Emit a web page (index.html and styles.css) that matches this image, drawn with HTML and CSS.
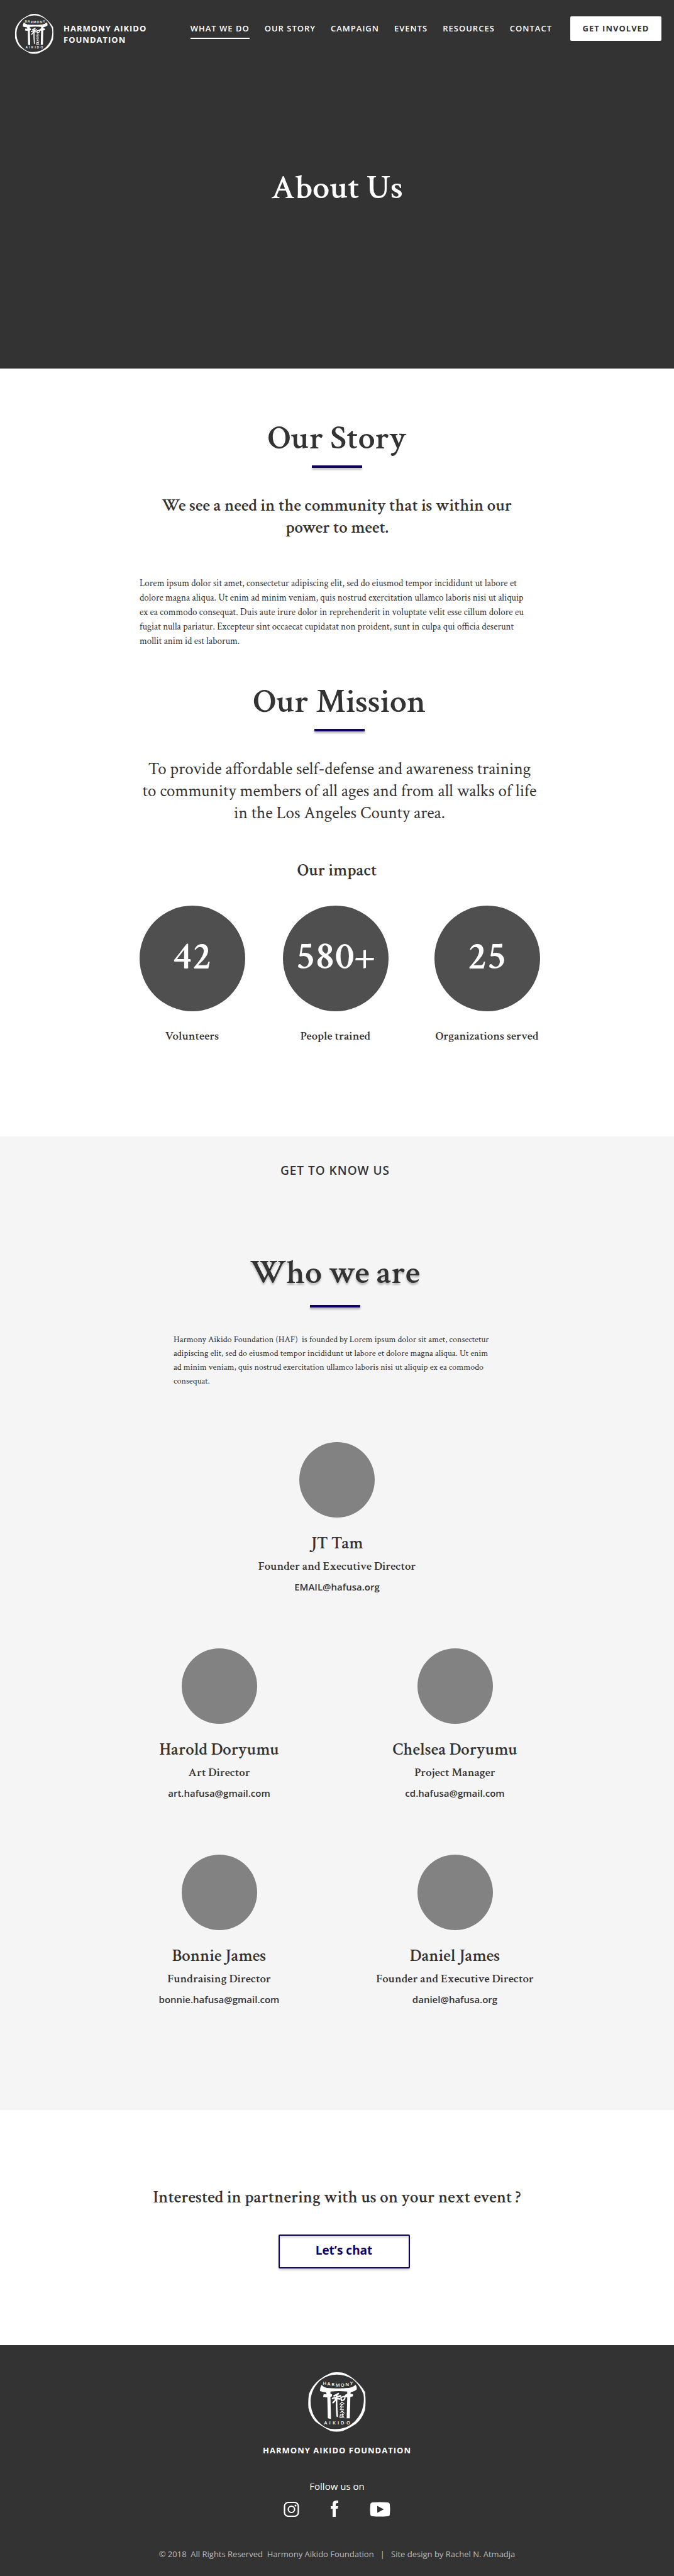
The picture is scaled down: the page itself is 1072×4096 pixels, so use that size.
FILE: index.html
```html
<!DOCTYPE html>
<html lang="en">
<head>
<meta charset="utf-8">
<meta name="viewport" content="width=device-width, initial-scale=1">
<title>About Us - Harmony Aikido Foundation</title>
<link rel="stylesheet" href="styles.css">
</head>
<body>
<header class="hero">
  <div class="topbar">
    <a class="brand" href="#">
      <svg class="seal brand-seal" viewBox="0 0 109 114" aria-hidden="true">
        <g id="gate">
          <path fill="currentColor" fill-rule="evenodd" d="M44 1 Q54 -1 66 1 Q80 6 92 18 Q103 28 108 38 Q110 56 108 72 Q102 90 90 99 Q78 107 66 112 Q54 115 42 112 Q28 105 13 94 Q3 82 0 68 Q-1 54 1 41 Q8 24 21 14 Q32 6 44 1 Z M46 5 Q30 8 20 18 Q5 34 4 54 Q4 74 13 87 Q26 105 42 108 Q58 110 72 105 Q90 97 100 78 Q108 60 105 42 Q98 24 84 13 Q66 2 46 5 Z"/>
          <path fill="currentColor" d="M25 24 Q22 29 22 36 Q28 38 33 38 L35 42 L29 42 L28 47 L36 48 L37 88 L43 89 L42 47 L45 46 L45 42 L42 41 L42 37 Q58 35 74 37 L74 41 L70 43 L70 47 L74 48 L73 88 L79 88 L80 47 L85 46 L85 42 L80 41 L81 38 Q88 37 92 33 Q93 28 90 24 Q85 29 77 30 Q57 32 35 30 Q28 28 25 24 Z"/>
          <g fill="none" stroke="currentColor" stroke-linecap="round">
            <path stroke-width="3" d="M57 41 Q52 44 49 45 M46 50 L61 45 M54 45 Q53 66 55 84 M53 49 Q51 55 47 58 M55 50 L60 51"/>
            <path stroke-width="2.500" d="M62 48 L69 46 Q71 50 67 53 L63 54 L62 48"/>
            <path stroke-width="1.500" d="M64 57 L60 61 M64 57 L68 60 M62 62 H66 M64 62 L61 66 H67 M63 68 L61 71 H67 M62 74 H66 L61 77 M65 75 L68 78 M61 81 L60 86 L68 87 M63 81 H67 M65 79 L64 84 H67"/>
          </g>
        </g>
        <text class="seal-text" x="31 39 47 56 65 74 82" y="24 25 26 27 27 26 24">HARMONY</text>
        <text class="seal-text" x="33 41 49 57 65 76" y="99">AIKIDO</text>
      </svg>
      <span class="brand-name">HARMONY AIKIDO FOUNDATION</span>
    </a>
    <nav class="nav">
      <a class="nav-link active" href="#">WHAT WE DO</a>
      <a class="nav-link" href="#story">OUR STORY</a>
      <a class="nav-link" href="#">CAMPAIGN</a>
      <a class="nav-link" href="#">EVENTS</a>
      <a class="nav-link" href="#">RESOURCES</a>
      <a class="nav-link" href="#">CONTACT</a>
      <button class="involved" type="button">GET INVOLVED</button>
    </nav>
  </div>
  <h1 class="title">About Us</h1>
</header>

<main>
  <section class="story" id="story">
    <h2 class="title ruled">Our Story</h2>
    <p class="lead">We see a need in the community that is within our power to meet.</p>
    <p class="copy">Lorem ipsum dolor sit amet, consectetur adipiscing elit, sed do eiusmod tempor incididunt ut labore et<br>dolore magna aliqua. Ut enim ad minim veniam, quis nostrud exercitation ullamco laboris nisi ut aliquip<br>ex ea commodo consequat. Duis aute irure dolor in reprehenderit in voluptate velit esse cillum dolore eu<br>fugiat nulla pariatur. Excepteur sint occaecat cupidatat non proident, sunt in culpa qui officia deserunt<br>mollit anim id est laborum.</p>
  </section>

  <section class="mission">
    <h2 class="title ruled">Our Mission</h2>
    <p class="statement">To provide affordable self-defense and awareness training<br>to community members of all ages and from all walks of life<br>in the Los Angeles County area.</p>
    <h3 class="impact-title">Our impact</h3>
    <dl class="impact">
      <div class="stat"><dd class="stat-value">42</dd><dt class="stat-label">Volunteers</dt></div>
      <div class="stat"><dd class="stat-value">580+</dd><dt class="stat-label">People trained</dt></div>
      <div class="stat"><dd class="stat-value">25</dd><dt class="stat-label">Organizations served</dt></div>
    </dl>
  </section>

  <section class="people">
    <div class="people-intro">
      <p class="eyebrow">GET TO KNOW US</p>
      <h2 class="title who ruled">Who we are</h2>
      <p class="bio">Harmony Aikido Foundation (HAF)&nbsp; is founded by Lorem ipsum dolor sit amet, consectetur<br>adipiscing elit, sed do eiusmod tempor incididunt ut labore et dolore magna aliqua. Ut enim<br>ad minim veniam, quis nostrud exercitation ullamco laboris nisi ut aliquip ex ea commodo<br>consequat.</p>
    </div>
    <div class="team">
      <article class="person lead-person">
        <div class="avatar"></div>
        <h3 class="name">JT Tam</h3>
        <p class="role">Founder and Executive Director</p>
        <a class="email" href="mailto:EMAIL@hafusa.org">EMAIL@hafusa.org</a>
      </article>
      <article class="person">
        <div class="avatar"></div>
        <h3 class="name">Harold Doryumu</h3>
        <p class="role">Art Director</p>
        <a class="email" href="mailto:art.hafusa@gmail.com">art.hafusa@gmail.com</a>
      </article>
      <article class="person">
        <div class="avatar"></div>
        <h3 class="name">Chelsea Doryumu</h3>
        <p class="role">Project Manager</p>
        <a class="email" href="mailto:cd.hafusa@gmail.com">cd.hafusa@gmail.com</a>
      </article>
      <article class="person">
        <div class="avatar"></div>
        <h3 class="name">Bonnie James</h3>
        <p class="role">Fundraising Director</p>
        <a class="email" href="mailto:bonnie.hafusa@gmail.com">bonnie.hafusa@gmail.com</a>
      </article>
      <article class="person">
        <div class="avatar"></div>
        <h3 class="name">Daniel James</h3>
        <p class="role">Founder and Executive Director</p>
        <a class="email" href="mailto:daniel@hafusa.org">daniel@hafusa.org</a>
      </article>
    </div>
  </section>

  <section class="partner">
    <h2 class="partner-title">Interested in partnering with us on your next event ?</h2>
    <button class="chat" type="button">Let’s chat</button>
  </section>
</main>

<footer class="footer">
  <svg class="seal footer-seal" viewBox="0 0 109 114" aria-hidden="true">
    <use href="#gate"/>
    <text class="seal-text" x="31 39 47 56 65 74 82" y="24 25 26 27 27 26 24">HARMONY</text>
    <text class="seal-text" x="33 41 49 57 65 76" y="99">AIKIDO</text>
  </svg>
  <p class="footer-name">HARMONY AIKIDO FOUNDATION</p>
  <p class="follow">Follow us on</p>
  <div class="social">
    <a href="#" aria-label="Instagram"><svg width="25" height="26" viewBox="0 0 25 26" fill="none" stroke="currentColor"><rect x="1.500" y="3" width="22" height="22" rx="6" stroke-width="2.200"/><circle cx="12.500" cy="14" r="5" stroke-width="2.200"/><circle cx="19" cy="8" r="1.600" fill="currentColor" stroke="none"/></svg></a>
    <a href="#" aria-label="Facebook"><svg width="12" height="26" viewBox="0 0 12 26" fill="currentColor"><path d="M3 26V13H0V9H3V6Q3 0 9 0H12V4H10Q8 4 8 6V9H12L11 13H8V26Z"/></svg></a>
    <a href="#" aria-label="YouTube"><svg width="33" height="26" viewBox="0 0 33 26" fill="currentColor" fill-rule="evenodd"><path d="M5 3Q16 2 28 3Q32 3 32 7Q33 14 32 22Q32 25 28 25Q16 26 5 25Q1 25 1 22Q0 14 1 7Q1 3 5 3ZM12 8.500V19.500L22.500 14Z"/></svg></a>
  </div>
  <p class="legal">© 2018&nbsp; All Rights Reserved&nbsp; Harmony Aikido Foundation&nbsp;&nbsp; |&nbsp;&nbsp; Site design by Rachel N. Atmadja</p>
</footer>
</body>
</html>
```
FILE: styles.css
```css
* { box-sizing: border-box; }

body {
  margin: 0;
  background: #fff;
  color: #333;
  font-family: "Crimson Text", "Liberation Serif", serif;
}

h1, h2, h3, p, dl, dd { margin: 0; font-weight: 400; }
a { color: inherit; text-decoration: none; }
button { font-family: "Open Sans", sans-serif; cursor: pointer; }

.seal { overflow: visible; }

.seal-text {
  fill: currentColor;
  font-family: "Open Sans", sans-serif;
  font-size: 9px;
  font-weight: 600;
  text-anchor: middle;
}

/* Header */
.hero {
  padding-bottom: 247px;
  background: #333;
  color: #fff;
  text-align: center;
}

.topbar {
  display: flex;
  justify-content: space-between;
  align-items: flex-start;
  height: 259px;
  padding: 22px 20px 0 24px;
  font-family: "Open Sans", sans-serif;
  text-align: left;
}

.brand { display: flex; gap: 16px; }
.brand-seal { width: 61px; height: 64px; }

.brand-name {
  width: 150px;
  padding-top: 14px;
  font-size: 13px;
  font-weight: 700;
  line-height: 18px;
  letter-spacing: 1px;
}

.nav { display: flex; gap: 24px; padding-top: 4px; }

.nav-link {
  height: 36px;
  padding-top: 10px;
  font-size: 13px;
  font-weight: 600;
  line-height: 18px;
  letter-spacing: 1px;
  white-space: nowrap;
}

.active { border-bottom: 2px solid #fff; }

.involved {
  width: 145px;
  height: 39px;
  margin-left: 5px;
  padding: 0 0 2px;
  border: 0;
  border-radius: 2px;
  background: #fff;
  color: #333;
  font-size: 13px;
  font-weight: 700;
  letter-spacing: 1px;
}

.title { font-size: 54px; font-weight: 600; line-height: 80px; }

.ruled::after {
  content: "";
  display: block;
  width: 80px;
  height: 4px;
  margin: 3px auto 0;
  background: #12005e;
  box-shadow: 0 3px 3px rgba(0, 0, 0, 0.25);
}

/* Story */
.story { padding-top: 71px; text-align: center; }

.lead {
  max-width: 600px;
  margin: 42px auto 0;
  font-size: 27px;
  font-weight: 600;
  line-height: 35px;
}

.copy {
  max-width: 628px;
  margin: 60px auto 0;
  font-size: 15px;
  line-height: 23px;
  text-align: left;
}

/* Mission */
.mission {
  padding: 45px 0 144px 8px;
  text-align: center;
}

.statement { margin-top: 42px; font-size: 27px; line-height: 35px; }

.impact-title {
  margin-top: 56px;
  padding-right: 8px;
  font-size: 27px;
  font-weight: 600;
  line-height: 35px;
}

.impact {
  display: flex;
  justify-content: center;
  margin-top: 39px;
}

.stat { width: 168px; }
.stat + .stat { margin-left: 60px; }
.stat:last-child { margin-left: 73px; }

.stat-value {
  height: 168px;
  border-radius: 50%;
  background: #4f4f4f;
  color: #fff;
  font-size: 63px;
  font-weight: 600;
  line-height: 162px;
}

.stat-label {
  display: block;
  margin-top: 25px;
  font-size: 19px;
  font-weight: 600;
  line-height: 30px;
  white-space: nowrap;
}

/* People */
.people {
  padding: 42px 0 164px;
  background: #f5f5f5;
  text-align: center;
}

.people-intro { padding-right: 6px; }

.eyebrow {
  font-family: "Open Sans", sans-serif;
  font-size: 19px;
  font-weight: 600;
  line-height: 24px;
  letter-spacing: 1px;
}

.who {
  margin-top: 111px;
  text-shadow: 0 3px 3px rgba(0, 0, 0, 0.25);
}

.who::after { margin-top: 11px; }

.bio {
  max-width: 514px;
  margin: 40px auto 0;
  font-size: 14px;
  line-height: 22px;
  text-align: left;
}

.team {
  display: grid;
  grid-template-columns: 375px 375px;
  justify-content: center;
  row-gap: 86px;
  margin-top: 86px;
}

.lead-person { grid-column: 1 / 3; }

.person {
  display: flex;
  flex-direction: column;
  align-items: center;
}

.avatar { width: 120px; height: 120px; border-radius: 50%; background: #828282; }
.name { margin-top: 21px; font-size: 27px; font-weight: 600; line-height: 40px; }
.role { margin-top: 2px; font-size: 19px; font-weight: 600; line-height: 30px; }
.email { margin-top: 5px; font: 600 15px/24px "Open Sans", sans-serif; }

/* Partner */
.partner { padding: 119px 0 122px; text-align: center; }
.partner-title { font-size: 27px; font-weight: 600; line-height: 40px; }

.chat {
  display: block;
  width: 209px;
  height: 54px;
  margin: 39px auto 0;
  padding: 0 0 4px;
  border: 2px solid #12005e;
  border-radius: 2px;
  background: #fff;
  box-shadow: 0 3px 3px rgba(0, 0, 0, 0.15), inset 0 3px 3px rgba(0, 0, 0, 0.15);
  color: #12005e;
  font-size: 19px;
  font-weight: 700;
  transform: none;
}

.partner .chat { position: static; }
.partner { padding-left: 22px; }
.partner-title { margin-left: -22px; }

/* Footer */
.footer {
  display: flex;
  flex-direction: column;
  align-items: center;
  padding: 43px 0 25px;
  background: #333;
  color: #fff;
  font-family: "Open Sans", sans-serif;
}

.footer-seal { width: 92px; height: 95px; }
.footer-name { margin-top: 19px; font-size: 13px; font-weight: 700; line-height: 20px; letter-spacing: 1px; }
.follow { margin-top: 35px; font-size: 15px; line-height: 24px; }
.social { display: flex; gap: 50px; margin-top: 11px; }
.social a, .social svg { display: block; }
.legal { margin-top: 49px; color: #bdbdbd; font-size: 13px; line-height: 20px; }
```
